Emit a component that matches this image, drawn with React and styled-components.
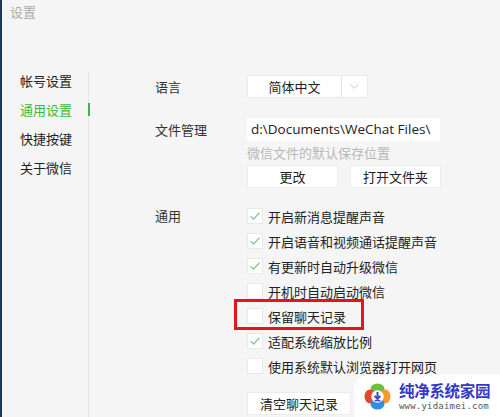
import styled, { createGlobalStyle } from "styled-components";

const GlobalStyle = createGlobalStyle`
  html, body {
    margin: 0;
    padding: 0;
    background: #f5f5f5;
  }
  body {
    font-family: "Noto Sans CJK SC", "Noto Sans", sans-serif;
  }
`;

const CJK = `"Noto Sans CJK SC", "Noto Sans", sans-serif`;

const Window = styled.div`
  position: relative;
  width: 500px;
  height: 417px;
  box-sizing: border-box;
  border-left: 2px solid #1f3a58;
  background: #f5f5f5;
  overflow: hidden;
  font-family: ${CJK};
  color: #333;
`;

const TitleBar = styled.div`
  height: 28px;
  padding-left: 8px;
  font-size: 13px;
  line-height: 24px;
  color: #ababab;
`;

const Body = styled.div`
  display: flex;
`;

const Sidebar = styled.nav`
  width: 87px;
  margin-top: 44px;
  height: 345px;
  border-right: 1px solid #e4e4e4;
  display: flex;
  flex-direction: column;
  gap: 12px;
  padding-left: 18px;
  box-sizing: border-box;
`;

const NavItem = styled.div`
  position: relative;
  font-size: 13px;
  line-height: 17px;
  height: 17px;
  color: ${(p) => (p.$active ? "#3cb93c" : "#222")};
`;

const ActiveMark = styled.span`
  position: absolute;
  right: -2px;
  top: 0;
  width: 2px;
  height: 13px;
  margin-top: 2px;
  background: #3cb93c;
`;

const Content = styled.div`
  flex: 1;
  padding: 47px 0 0 66px;
  display: grid;
  grid-template-columns: 92px 1fr;
  align-content: start;
`;

const Label = styled.div`
  font-size: 13px;
  line-height: ${(p) => p.$lh || 23}px;
  color: #333;
  margin-top: ${(p) => p.$top || 0}px;
`;

const Controls = styled.div`
  display: flex;
  flex-direction: column;
  align-items: flex-start;
  margin-top: ${(p) => p.$top || 0}px;
`;

const Select = styled.div`
  display: flex;
  width: 121px;
  height: 23px;
  background: #fff;
  border: 1px solid #eaeaea;
  box-sizing: border-box;
`;

const SelectValue = styled.div`
  width: 93px;
  text-align: center;
  font-size: 13px;
  line-height: 21px;
  color: #222;
  border-right: 1px solid #e4e4e4;
`;

const SelectArrow = styled.div`
  flex: 1;
  display: flex;
  align-items: center;
  justify-content: center;
`;

const PathBox = styled.div`
  width: 193px;
  height: 23px;
  background: #fff;
  padding-left: 4px;
  box-sizing: border-box;
  font-family: "Open Sans", "Liberation Sans", sans-serif;
  font-size: 13.5px;
  line-height: 23px;
  color: #222;
  white-space: nowrap;
  overflow: hidden;
`;

const Hint = styled.div`
  font-size: 13px;
  line-height: 16px;
  color: #b8b8b8;
  margin-top: 4px;
`;

const ButtonRow = styled.div`
  display: flex;
  gap: 12px;
  margin-top: 4px;
`;

const Button = styled.div`
  width: ${(p) => p.$w}px;
  height: 23px;
  margin-top: ${(p) => p.$top || 0}px;
  background: #fff;
  border: 1px solid #ececec;
  box-sizing: border-box;
  text-align: center;
  font-size: 13px;
  line-height: 21px;
  color: #222;
`;

const CheckList = styled.div`
  display: flex;
  flex-direction: column;
  gap: 9px;
`;

const CheckRow = styled.div`
  display: flex;
  align-items: center;
  gap: 5px;
  height: 16px;
  font-size: 13px;
  color: #222;
`;

const Box = styled.span`
  width: 16px;
  height: 16px;
  box-sizing: border-box;
  background: #fff;
  border: 1px solid #e8e8e8;
  display: flex;
  align-items: center;
  justify-content: center;
`;

const Highlight = styled.div`
  position: absolute;
  left: 232px;
  top: 299px;
  width: 130px;
  height: 31px;
  box-sizing: border-box;
  border: 3px solid #e3151b;
`;

const Watermark = styled.div`
  position: absolute;
  right: 0;
  bottom: 0;
  width: 146px;
  height: 42px;
  display: flex;
  align-items: center;
  gap: 8px;
  padding-left: 10px;
  box-sizing: border-box;
  border-top-left-radius: 14px;
  background: linear-gradient(to right, rgba(255,255,255,0.85), #fff 20%);
`;

const Brand = styled.div`
  display: flex;
  flex-direction: column;
  gap: 2px;
`;

const BrandName = styled.div`
  font-family: ${CJK};
  font-weight: 700;
  font-size: 15.5px;
  line-height: 17px;
  height: 17px;
  color: #3737c8;
  letter-spacing: -0.3px;
`;

const BrandUrl = styled.div`
  font-family: "DejaVu Sans Mono", "Liberation Mono", monospace;
  font-size: 9px;
  line-height: 10px;
  height: 10px;
  color: #555;
  letter-spacing: 0.2px;
`;

function Check({ checked }) {
  return (
    <Box>
      {checked && (
        <svg width="12" height="10" viewBox="0 0 12 10">
          <path d="M1.5 5.2 L4.6 8 L10.5 1.8" fill="none" stroke="#8cca8c" strokeWidth="1.3" />
        </svg>
      )}
    </Box>
  );
}

function Logo() {
  return (
    <svg width="27" height="27" viewBox="0 0 27 27">
      <ellipse cx="13.5" cy="6" rx="7" ry="5.5" fill="#6dbf3f" />
      <ellipse cx="6" cy="13.5" rx="5.5" ry="7" fill="#e8452f" />
      <ellipse cx="21" cy="13.5" rx="5.5" ry="7" fill="#f29a2e" />
      <ellipse cx="13.5" cy="21" rx="7" ry="5.5" fill="#2f8fe0" />
      <circle cx="13.5" cy="13.5" r="6.2" fill="#fff" />
      <path d="M13.5 9 V15.5 M10.6 12.8 L13.5 16 L16.4 12.8" fill="none" stroke="#4646c6" strokeWidth="2" />
      <path d="M10.5 17.6 H16.5" stroke="#4646c6" strokeWidth="1.4" />
    </svg>
  );
}

const options = [
  ["开启新消息提醒声音", true],
  ["开启语音和视频通话提醒声音", true],
  ["有更新时自动升级微信", true],
  ["开机时自动启动微信", false],
  ["保留聊天记录", false],
  ["适配系统缩放比例", true],
  ["使用系统默认浏览器打开网页", false],
];

export default function App() {
  return (
    <Window>
      <GlobalStyle />
      <TitleBar>设置</TitleBar>
      <Body>
        <Sidebar>
          <NavItem>帐号设置</NavItem>
          <NavItem $active>
            通用设置
            <ActiveMark />
          </NavItem>
          <NavItem>快捷按键</NavItem>
          <NavItem>关于微信</NavItem>
        </Sidebar>
        <Content>
          <Label>语言</Label>
          <Controls>
            <Select>
              <SelectValue>简体中文</SelectValue>
              <SelectArrow>
                <svg width="9" height="5" viewBox="0 0 9 5">
                  <path d="M0.5 0.5 L4.5 4.5 L8.5 0.5" fill="none" stroke="#c8c8c8" strokeWidth="1" />
                </svg>
              </SelectArrow>
            </Select>
          </Controls>

          <Label $top={20}>文件管理</Label>
          <Controls $top={20}>
            <PathBox>d:\Documents\WeChat Files\</PathBox>
            <Hint>微信文件的默认保存位置</Hint>
            <ButtonRow>
              <Button $w={91}>更改</Button>
              <Button $w={91}>打开文件夹</Button>
            </ButtonRow>
          </Controls>

          <Label $top={20} $lh={16}>通用</Label>
          <Controls $top={20}>
            <CheckList>
              {options.map(([text, on]) => (
                <CheckRow key={text}>
                  <Check checked={on} />
                  {text}
                </CheckRow>
              ))}
            </CheckList>
            <Button $w={104} $top={18}>清空聊天记录</Button>
          </Controls>
        </Content>
      </Body>
      <Highlight />
      <Watermark>
        <Logo />
        <Brand>
          <BrandName>纯净系统家园</BrandName>
          <BrandUrl>www.yidaimei.com</BrandUrl>
        </Brand>
      </Watermark>
    </Window>
  );
}
